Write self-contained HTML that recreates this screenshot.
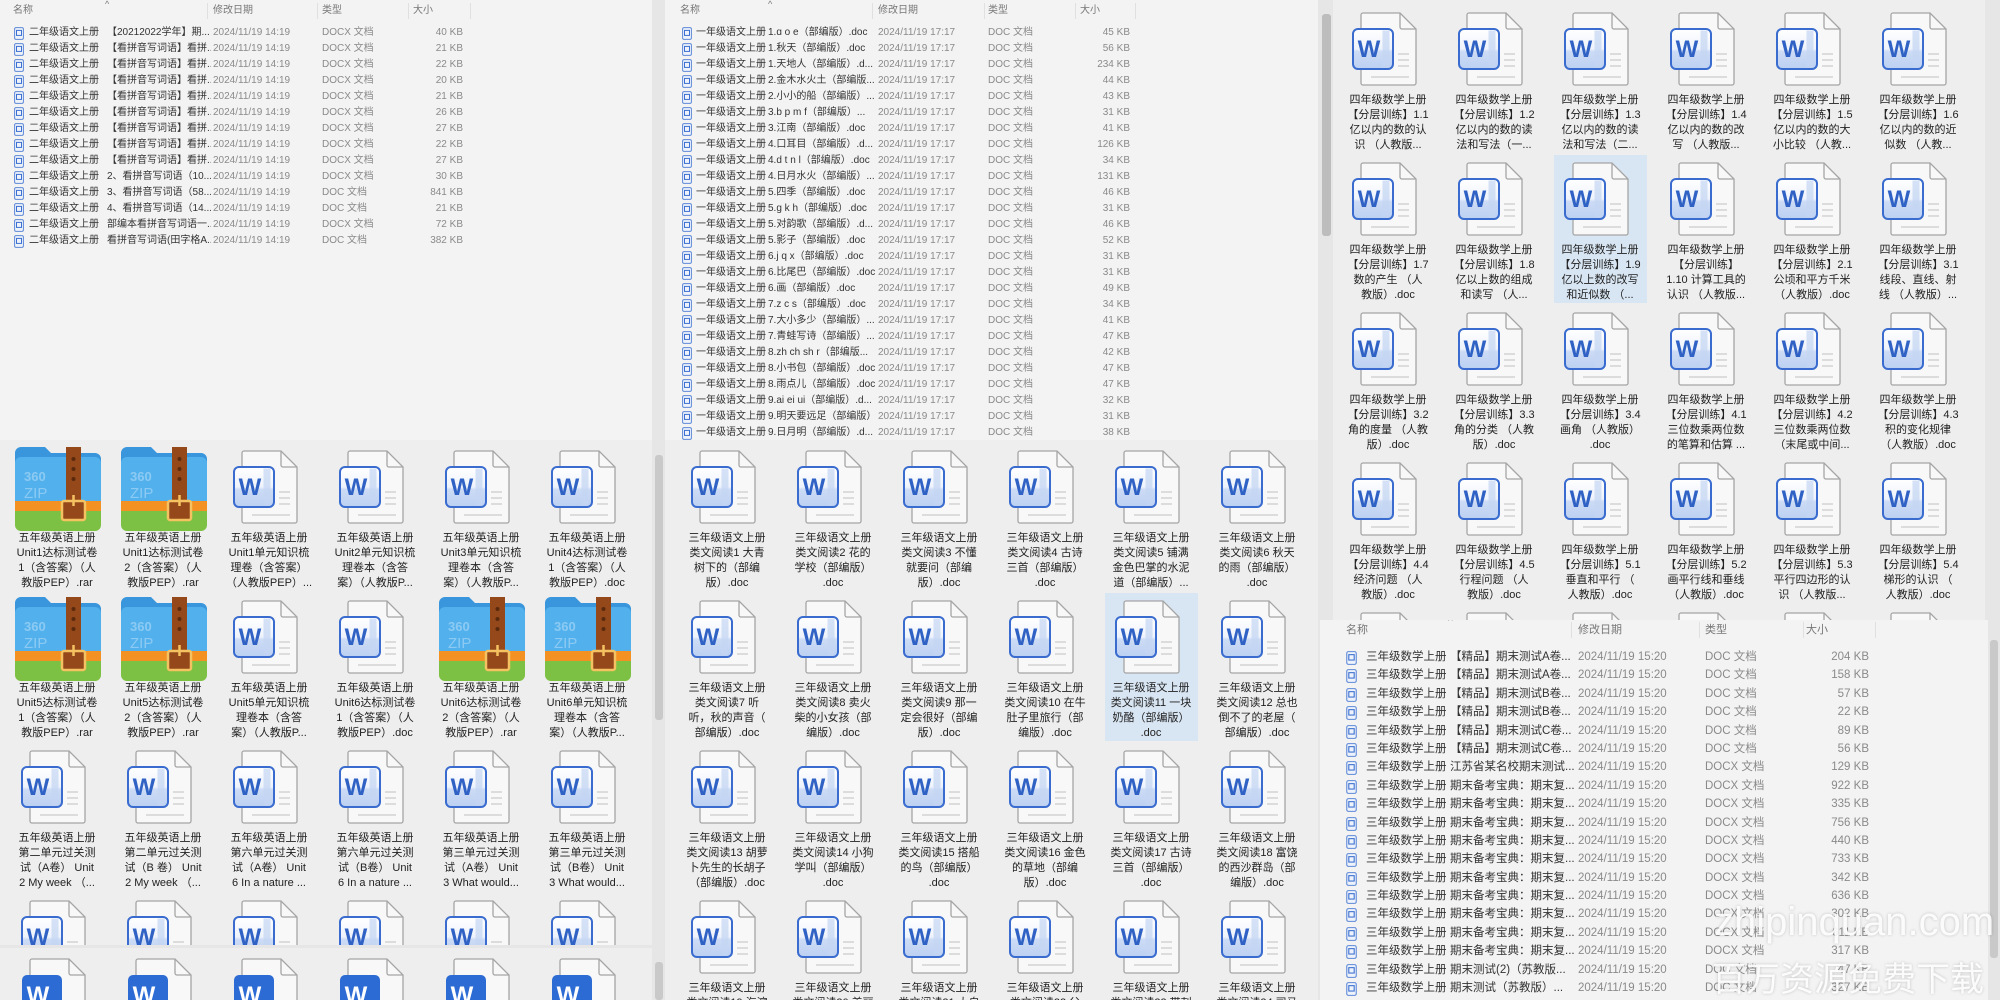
<!DOCTYPE html>
<html><head><meta charset="utf-8">
<style>
*{margin:0;padding:0;box-sizing:border-box}
html{width:2000px;height:1000px;overflow:hidden}
body{width:2000px;height:1000px;overflow:hidden;background:#e6e6e6;font-family:"Liberation Sans","Noto Sans CJK SC",sans-serif;position:relative}
.p{position:absolute;overflow:hidden;background:#eeeeee}
.sb{position:absolute;background:#e6e6e6}
.sb i{position:absolute;left:2px;right:2px;background:#c9c9c9;border-radius:3px}
.hd{position:absolute;left:0;right:0;top:3px;height:16px;font-size:10px;color:#777;line-height:16px}
.hd span{position:absolute}
.hd b{position:absolute;top:0;width:1px;height:16px;background:#e0e0e0}
.ls{position:absolute;left:0;right:0}
.r{position:relative;height:16px;font-size:10px;line-height:16px;white-space:nowrap;color:#333}
.r span{position:absolute;overflow:hidden}
.r svg{position:absolute;top:2px;width:10px;height:13px}
.r .d,.r .t,.r .z{color:#8a8a8a}
.r .z{text-align:right}
.L .r svg{left:14px}.L .a{left:29px;width:75px}.L .b{left:107px;width:104px}.L .d{left:213px}.L .t{left:322px}.L .z{left:400px;width:63px}
.M .r svg{left:17px}.M .a{left:31px;width:70px}.M .b{left:103px;width:108px}.M .d{left:213px}.M .t{left:323px}.M .z{left:400px;width:65px}
.R .r{height:18.4px;line-height:18.4px;font-size:11.5px}
.R .r svg{left:26px;top:3px;width:11px;height:14px}.R .a{left:46px;width:84px}.R .b{left:130px;width:126px}.R .d{left:258px}.R .t{left:385px}.R .z{left:480px;width:69px}
.g{position:absolute;display:grid;grid-template-columns:repeat(6,106px);grid-auto-rows:150px}
.c{position:relative;width:106px;height:150px;z-index:0}
.c svg.w{position:absolute;left:13px;top:0;width:80px;height:80px}
.c svg.zp{position:absolute;left:8px;top:-5px;width:86px;height:86px}
.c p{position:absolute;left:0;width:100px;top:81px;text-align:center;font-size:11px;line-height:15px;color:#222;white-space:nowrap;overflow:hidden}
.sel::before{content:"";position:absolute;left:4px;top:-7px;width:93px;height:148px;background:#d8e5f2;z-index:-1}
.wm{position:absolute;color:rgba(255,255,255,.9);text-shadow:0 0 3px rgba(0,0,0,.2);white-space:nowrap}
</style></head><body>
<svg width="0" height="0" style="position:absolute">
<defs>
<linearGradient id="wg" x1="0" y1="0" x2="0" y2="1"><stop offset="0" stop-color="#fff"/><stop offset=".5" stop-color="#eef3fc"/><stop offset=".56" stop-color="#cddcf5"/><stop offset="1" stop-color="#bcd0f2"/></linearGradient>
<symbol id="d" viewBox="0 0 80 80">
<path d="M12 1h37l16 16v54a2 2 0 0 1-2 2H12a2 2 0 0 1-2-2V3a2 2 0 0 1 2-2z" fill="#f8f8f8" stroke="#a5a5a5" stroke-width="1.3"/>
<path d="M49 1v14a2 2 0 0 0 2 2h14" fill="none" stroke="#a5a5a5" stroke-width="1.3"/>
<path d="M47 42h11M47 48h11M47 54h11M20 65h38" stroke="#dcdcdc" stroke-width="2"/>
<rect x="2" y="17" width="40" height="40" rx="5" fill="url(#wg)" stroke="#3a6ccf" stroke-width="2"/>
<path d="M35 18.5v37" stroke="#c4d6f3" stroke-width="7" opacity=".7"/>
<text x="18" y="45" font-family="Liberation Sans" font-weight="bold" font-size="24" fill="#2f62c4" text-anchor="middle">W</text>
</symbol>
<symbol id="f" viewBox="0 0 80 80">
<path d="M12 1h37l16 16v54a2 2 0 0 1-2 2H12a2 2 0 0 1-2-2V3a2 2 0 0 1 2-2z" fill="#f8f8f8" stroke="#a5a5a5" stroke-width="1.3"/>
<path d="M49 1v14a2 2 0 0 0 2 2h14" fill="none" stroke="#a5a5a5" stroke-width="1.3"/>
<rect x="2" y="17" width="40" height="40" rx="5" fill="#2d6bd4"/>
<text x="18" y="45" font-family="Liberation Sans" font-weight="bold" font-size="24" fill="#fff" text-anchor="middle">W</text>
</symbol>
<symbol id="zp" viewBox="0 0 86 86">
<path d="M6 2h24l6 6h44a6 6 0 0 1 6 6v6H0V8a6 6 0 0 1 6-6z" fill="#3a96dc"/>
<rect x="0" y="12" width="86" height="56" rx="6" fill="#52b1ec"/>
<rect x="0" y="56" width="86" height="10" fill="#f39223"/>
<path d="M0 66h86v14a6 6 0 0 1-6 6H6a6 6 0 0 1-6-6z" fill="#7cc143"/>
<rect x="51" y="2" width="15" height="60" fill="#95491b"/>
<circle cx="58.5" cy="14" r="2" fill="#5a2a0c"/><circle cx="58.5" cy="24" r="2" fill="#5a2a0c"/><circle cx="58.5" cy="34" r="2" fill="#5a2a0c"/>
<rect x="47" y="56" width="23" height="19" rx="2" fill="#95491b" stroke="#f5c262" stroke-width="2.5"/>
<path d="M58.5 50v11" stroke="#f5c262" stroke-width="2.5"/>
<text x="9" y="36" font-family="Liberation Sans" font-weight="bold" font-size="13" fill="#8ccaf3">360</text>
<text x="9" y="53" font-family="Liberation Sans" font-size="15" fill="#8ccaf3">ZIP</text>
</symbol>
<symbol id="s" viewBox="0 0 10 13"><rect x=".6" y=".6" width="8.8" height="11.8" rx="1.5" fill="#eef3fb" stroke="#5d88d6" stroke-width="1"/><rect x="2.5" y="3.4" width="5" height="5" fill="none" stroke="#3b6fd1" stroke-width="1"/></symbol>
</defs></svg>

<div class="p L" style="left:0;top:0;width:652px;height:440px;background:#f3f3f3">
<div class="hd"><span style="left:13px">名称</span><span style="left:105px;top:-7px;font-size:9px">^</span><b style="left:207px"></b><span style="left:213px">修改日期</span><b style="left:317px"></b><span style="left:322px">类型</span><b style="left:408px"></b><span style="left:413px">大小</span><b style="left:470px"></b></div>
<div class="ls" style="top:25px">
<div class="r"><svg><use href="#s"/></svg><span class="a">二年级语文上册</span><span class="b">【20212022学年】期...</span><span class="d">2024/11/19 14:19</span><span class="t">DOCX 文档</span><span class="z">40 KB</span></div>
<div class="r"><svg><use href="#s"/></svg><span class="a">二年级语文上册</span><span class="b">【看拼音写词语】看拼...</span><span class="d">2024/11/19 14:19</span><span class="t">DOCX 文档</span><span class="z">21 KB</span></div>
<div class="r"><svg><use href="#s"/></svg><span class="a">二年级语文上册</span><span class="b">【看拼音写词语】看拼...</span><span class="d">2024/11/19 14:19</span><span class="t">DOCX 文档</span><span class="z">22 KB</span></div>
<div class="r"><svg><use href="#s"/></svg><span class="a">二年级语文上册</span><span class="b">【看拼音写词语】看拼...</span><span class="d">2024/11/19 14:19</span><span class="t">DOCX 文档</span><span class="z">20 KB</span></div>
<div class="r"><svg><use href="#s"/></svg><span class="a">二年级语文上册</span><span class="b">【看拼音写词语】看拼...</span><span class="d">2024/11/19 14:19</span><span class="t">DOCX 文档</span><span class="z">21 KB</span></div>
<div class="r"><svg><use href="#s"/></svg><span class="a">二年级语文上册</span><span class="b">【看拼音写词语】看拼...</span><span class="d">2024/11/19 14:19</span><span class="t">DOCX 文档</span><span class="z">26 KB</span></div>
<div class="r"><svg><use href="#s"/></svg><span class="a">二年级语文上册</span><span class="b">【看拼音写词语】看拼...</span><span class="d">2024/11/19 14:19</span><span class="t">DOCX 文档</span><span class="z">27 KB</span></div>
<div class="r"><svg><use href="#s"/></svg><span class="a">二年级语文上册</span><span class="b">【看拼音写词语】看拼...</span><span class="d">2024/11/19 14:19</span><span class="t">DOCX 文档</span><span class="z">22 KB</span></div>
<div class="r"><svg><use href="#s"/></svg><span class="a">二年级语文上册</span><span class="b">【看拼音写词语】看拼...</span><span class="d">2024/11/19 14:19</span><span class="t">DOCX 文档</span><span class="z">27 KB</span></div>
<div class="r"><svg><use href="#s"/></svg><span class="a">二年级语文上册</span><span class="b">2、看拼音写词语（10...</span><span class="d">2024/11/19 14:19</span><span class="t">DOCX 文档</span><span class="z">30 KB</span></div>
<div class="r"><svg><use href="#s"/></svg><span class="a">二年级语文上册</span><span class="b">3、看拼音写词语（58...</span><span class="d">2024/11/19 14:19</span><span class="t">DOC 文档</span><span class="z">841 KB</span></div>
<div class="r"><svg><use href="#s"/></svg><span class="a">二年级语文上册</span><span class="b">4、看拼音写词语（14...</span><span class="d">2024/11/19 14:19</span><span class="t">DOC 文档</span><span class="z">21 KB</span></div>
<div class="r"><svg><use href="#s"/></svg><span class="a">二年级语文上册</span><span class="b">部编本看拼音写词语一...</span><span class="d">2024/11/19 14:19</span><span class="t">DOCX 文档</span><span class="z">72 KB</span></div>
<div class="r"><svg><use href="#s"/></svg><span class="a">二年级语文上册</span><span class="b">看拼音写词语(田字格A...</span><span class="d">2024/11/19 14:19</span><span class="t">DOC 文档</span><span class="z">382 KB</span></div>
</div></div>

<div class="p M" style="left:665px;top:0;width:653px;height:440px;background:#f3f3f3">
<div class="hd"><span style="left:15px">名称</span><span style="left:103px;top:-7px;font-size:9px">^</span><b style="left:207px"></b><span style="left:213px">修改日期</span><b style="left:319px"></b><span style="left:323px">类型</span><b style="left:410px"></b><span style="left:415px">大小</span><b style="left:470px"></b></div>
<div class="ls" style="top:25px">
<div class="r"><svg><use href="#s"/></svg><span class="a">一年级语文上册</span><span class="b">1.ɑ o e（部编版）.doc</span><span class="d">2024/11/19 17:17</span><span class="t">DOC 文档</span><span class="z">45 KB</span></div>
<div class="r"><svg><use href="#s"/></svg><span class="a">一年级语文上册</span><span class="b">1.秋天（部编版）.doc</span><span class="d">2024/11/19 17:17</span><span class="t">DOC 文档</span><span class="z">56 KB</span></div>
<div class="r"><svg><use href="#s"/></svg><span class="a">一年级语文上册</span><span class="b">1.天地人（部编版）.d...</span><span class="d">2024/11/19 17:17</span><span class="t">DOC 文档</span><span class="z">234 KB</span></div>
<div class="r"><svg><use href="#s"/></svg><span class="a">一年级语文上册</span><span class="b">2.金木水火土（部编版...</span><span class="d">2024/11/19 17:17</span><span class="t">DOC 文档</span><span class="z">44 KB</span></div>
<div class="r"><svg><use href="#s"/></svg><span class="a">一年级语文上册</span><span class="b">2.小小的船（部编版）...</span><span class="d">2024/11/19 17:17</span><span class="t">DOC 文档</span><span class="z">43 KB</span></div>
<div class="r"><svg><use href="#s"/></svg><span class="a">一年级语文上册</span><span class="b">3.b p m f（部编版）...</span><span class="d">2024/11/19 17:17</span><span class="t">DOC 文档</span><span class="z">31 KB</span></div>
<div class="r"><svg><use href="#s"/></svg><span class="a">一年级语文上册</span><span class="b">3.江南（部编版）.doc</span><span class="d">2024/11/19 17:17</span><span class="t">DOC 文档</span><span class="z">41 KB</span></div>
<div class="r"><svg><use href="#s"/></svg><span class="a">一年级语文上册</span><span class="b">4.口耳目（部编版）.d...</span><span class="d">2024/11/19 17:17</span><span class="t">DOC 文档</span><span class="z">126 KB</span></div>
<div class="r"><svg><use href="#s"/></svg><span class="a">一年级语文上册</span><span class="b">4.d t n l（部编版）.doc</span><span class="d">2024/11/19 17:17</span><span class="t">DOC 文档</span><span class="z">34 KB</span></div>
<div class="r"><svg><use href="#s"/></svg><span class="a">一年级语文上册</span><span class="b">4.日月水火（部编版）...</span><span class="d">2024/11/19 17:17</span><span class="t">DOC 文档</span><span class="z">131 KB</span></div>
<div class="r"><svg><use href="#s"/></svg><span class="a">一年级语文上册</span><span class="b">5.四季（部编版）.doc</span><span class="d">2024/11/19 17:17</span><span class="t">DOC 文档</span><span class="z">46 KB</span></div>
<div class="r"><svg><use href="#s"/></svg><span class="a">一年级语文上册</span><span class="b">5.g k h（部编版）.doc</span><span class="d">2024/11/19 17:17</span><span class="t">DOC 文档</span><span class="z">31 KB</span></div>
<div class="r"><svg><use href="#s"/></svg><span class="a">一年级语文上册</span><span class="b">5.对韵歌（部编版）.d...</span><span class="d">2024/11/19 17:17</span><span class="t">DOC 文档</span><span class="z">46 KB</span></div>
<div class="r"><svg><use href="#s"/></svg><span class="a">一年级语文上册</span><span class="b">5.影子（部编版）.doc</span><span class="d">2024/11/19 17:17</span><span class="t">DOC 文档</span><span class="z">52 KB</span></div>
<div class="r"><svg><use href="#s"/></svg><span class="a">一年级语文上册</span><span class="b">6.j q x（部编版）.doc</span><span class="d">2024/11/19 17:17</span><span class="t">DOC 文档</span><span class="z">31 KB</span></div>
<div class="r"><svg><use href="#s"/></svg><span class="a">一年级语文上册</span><span class="b">6.比尾巴（部编版）.doc</span><span class="d">2024/11/19 17:17</span><span class="t">DOC 文档</span><span class="z">31 KB</span></div>
<div class="r"><svg><use href="#s"/></svg><span class="a">一年级语文上册</span><span class="b">6.画（部编版）.doc</span><span class="d">2024/11/19 17:17</span><span class="t">DOC 文档</span><span class="z">49 KB</span></div>
<div class="r"><svg><use href="#s"/></svg><span class="a">一年级语文上册</span><span class="b">7.z c s（部编版）.doc</span><span class="d">2024/11/19 17:17</span><span class="t">DOC 文档</span><span class="z">34 KB</span></div>
<div class="r"><svg><use href="#s"/></svg><span class="a">一年级语文上册</span><span class="b">7.大小多少（部编版）...</span><span class="d">2024/11/19 17:17</span><span class="t">DOC 文档</span><span class="z">41 KB</span></div>
<div class="r"><svg><use href="#s"/></svg><span class="a">一年级语文上册</span><span class="b">7.青蛙写诗（部编版）...</span><span class="d">2024/11/19 17:17</span><span class="t">DOC 文档</span><span class="z">47 KB</span></div>
<div class="r"><svg><use href="#s"/></svg><span class="a">一年级语文上册</span><span class="b">8.zh ch sh r（部编版...</span><span class="d">2024/11/19 17:17</span><span class="t">DOC 文档</span><span class="z">42 KB</span></div>
<div class="r"><svg><use href="#s"/></svg><span class="a">一年级语文上册</span><span class="b">8.小书包（部编版）.doc</span><span class="d">2024/11/19 17:17</span><span class="t">DOC 文档</span><span class="z">47 KB</span></div>
<div class="r"><svg><use href="#s"/></svg><span class="a">一年级语文上册</span><span class="b">8.雨点儿（部编版）.doc</span><span class="d">2024/11/19 17:17</span><span class="t">DOC 文档</span><span class="z">47 KB</span></div>
<div class="r"><svg><use href="#s"/></svg><span class="a">一年级语文上册</span><span class="b">9.ai ei ui（部编版）.d...</span><span class="d">2024/11/19 17:17</span><span class="t">DOC 文档</span><span class="z">32 KB</span></div>
<div class="r"><svg><use href="#s"/></svg><span class="a">一年级语文上册</span><span class="b">9.明天要远足（部编版）...</span><span class="d">2024/11/19 17:17</span><span class="t">DOC 文档</span><span class="z">31 KB</span></div>
<div class="r"><svg><use href="#s"/></svg><span class="a">一年级语文上册</span><span class="b">9.日月明（部编版）.d...</span><span class="d">2024/11/19 17:17</span><span class="t">DOC 文档</span><span class="z">38 KB</span></div>
</div></div>
<div class="sb" style="left:1318px;top:0;width:12px;height:440px"><i style="top:28px;height:385px"></i></div>

<div class="p" style="left:0;top:440px;width:652px;height:505px">
<div class="g" style="left:7px;top:10px">
<div class="c"><svg class="zp"><use href="#zp"/></svg><p>五年级英语上册<br>Unit1达标测试卷<br>1（含答案）（人<br>教版PEP）.rar</p></div>
<div class="c"><svg class="zp"><use href="#zp"/></svg><p>五年级英语上册<br>Unit1达标测试卷<br>2（含答案）（人<br>教版PEP）.rar</p></div>
<div class="c"><svg class="w"><use href="#d"/></svg><p>五年级英语上册<br>Unit1单元知识梳<br>理卷（含答案）<br>（人教版PEP）...</p></div>
<div class="c"><svg class="w"><use href="#d"/></svg><p>五年级英语上册<br>Unit2单元知识梳<br>理卷本（含答<br>案）（人教版P...</p></div>
<div class="c"><svg class="w"><use href="#d"/></svg><p>五年级英语上册<br>Unit3单元知识梳<br>理卷本（含答<br>案）（人教版P...</p></div>
<div class="c"><svg class="w"><use href="#d"/></svg><p>五年级英语上册<br>Unit4达标测试卷<br>1（含答案）（人<br>教版PEP）.doc</p></div>
<div class="c"><svg class="zp"><use href="#zp"/></svg><p>五年级英语上册<br>Unit5达标测试卷<br>1（含答案）（人<br>教版PEP）.rar</p></div>
<div class="c"><svg class="zp"><use href="#zp"/></svg><p>五年级英语上册<br>Unit5达标测试卷<br>2（含答案）（人<br>教版PEP）.rar</p></div>
<div class="c"><svg class="w"><use href="#d"/></svg><p>五年级英语上册<br>Unit5单元知识梳<br>理卷本（含答<br>案）（人教版P...</p></div>
<div class="c"><svg class="w"><use href="#d"/></svg><p>五年级英语上册<br>Unit6达标测试卷<br>1（含答案）（人<br>教版PEP）.doc</p></div>
<div class="c"><svg class="zp"><use href="#zp"/></svg><p>五年级英语上册<br>Unit6达标测试卷<br>2（含答案）（人<br>教版PEP）.rar</p></div>
<div class="c"><svg class="zp"><use href="#zp"/></svg><p>五年级英语上册<br>Unit6单元知识梳<br>理卷本（含答<br>案）（人教版P...</p></div>
<div class="c"><svg class="w"><use href="#d"/></svg><p>五年级英语上册<br>第二单元过关测<br>试（A卷） Unit<br>2 My week （...</p></div>
<div class="c"><svg class="w"><use href="#d"/></svg><p>五年级英语上册<br>第二单元过关测<br>试（B 卷） Unit<br>2 My week （...</p></div>
<div class="c"><svg class="w"><use href="#d"/></svg><p>五年级英语上册<br>第六单元过关测<br>试（A卷） Unit<br>6 In a nature ...</p></div>
<div class="c"><svg class="w"><use href="#d"/></svg><p>五年级英语上册<br>第六单元过关测<br>试（B卷） Unit<br>6 In a nature ...</p></div>
<div class="c"><svg class="w"><use href="#d"/></svg><p>五年级英语上册<br>第三单元过关测<br>试（A卷） Unit<br>3 What would...</p></div>
<div class="c"><svg class="w"><use href="#d"/></svg><p>五年级英语上册<br>第三单元过关测<br>试（B卷） Unit<br>3 What would...</p></div>
<div class="c"><svg class="w"><use href="#d"/></svg></div><div class="c"><svg class="w"><use href="#d"/></svg></div><div class="c"><svg class="w"><use href="#d"/></svg></div><div class="c"><svg class="w"><use href="#d"/></svg></div><div class="c"><svg class="w"><use href="#d"/></svg></div><div class="c"><svg class="w"><use href="#d"/></svg></div>
</div></div>
<div class="sb" style="left:653px;top:440px;width:12px;height:505px"><i style="top:15px;height:265px"></i></div>

<div class="p" style="left:0;top:948px;width:652px;height:52px">
<div class="g" style="left:7px;top:10px">
<div class="c"><svg class="w"><use href="#f"/></svg></div><div class="c"><svg class="w"><use href="#f"/></svg></div><div class="c"><svg class="w"><use href="#f"/></svg></div><div class="c"><svg class="w"><use href="#f"/></svg></div><div class="c"><svg class="w"><use href="#f"/></svg></div><div class="c"><svg class="w"><use href="#f"/></svg></div>
</div></div>
<div class="sb" style="left:653px;top:948px;width:12px;height:52px"><i style="top:14px;height:38px"></i></div>

<div class="p" style="left:665px;top:440px;width:653px;height:560px">
<div class="g" style="left:12px;top:10px">
<div class="c"><svg class="w"><use href="#d"/></svg><p>三年级语文上册<br>类文阅读1 大青<br>树下的（部编<br>版）.doc</p></div>
<div class="c"><svg class="w"><use href="#d"/></svg><p>三年级语文上册<br>类文阅读2 花的<br>学校（部编版）<br>.doc</p></div>
<div class="c"><svg class="w"><use href="#d"/></svg><p>三年级语文上册<br>类文阅读3 不懂<br>就要问（部编<br>版）.doc</p></div>
<div class="c"><svg class="w"><use href="#d"/></svg><p>三年级语文上册<br>类文阅读4 古诗<br>三首（部编版）<br>.doc</p></div>
<div class="c"><svg class="w"><use href="#d"/></svg><p>三年级语文上册<br>类文阅读5 铺满<br>金色巴掌的水泥<br>道（部编版）...</p></div>
<div class="c"><svg class="w"><use href="#d"/></svg><p>三年级语文上册<br>类文阅读6 秋天<br>的雨（部编版）<br>.doc</p></div>
<div class="c"><svg class="w"><use href="#d"/></svg><p>三年级语文上册<br>类文阅读7 听<br>听，秋的声音（<br>部编版）.doc</p></div>
<div class="c"><svg class="w"><use href="#d"/></svg><p>三年级语文上册<br>类文阅读8 卖火<br>柴的小女孩（部<br>编版）.doc</p></div>
<div class="c"><svg class="w"><use href="#d"/></svg><p>三年级语文上册<br>类文阅读9 那一<br>定会很好（部编<br>版）.doc</p></div>
<div class="c"><svg class="w"><use href="#d"/></svg><p>三年级语文上册<br>类文阅读10 在牛<br>肚子里旅行（部<br>编版）.doc</p></div>
<div class="c sel"><svg class="w"><use href="#d"/></svg><p>三年级语文上册<br>类文阅读11 一块<br>奶酪（部编版）<br>.doc</p></div>
<div class="c"><svg class="w"><use href="#d"/></svg><p>三年级语文上册<br>类文阅读12 总也<br>倒不了的老屋（<br>部编版）.doc</p></div>
<div class="c"><svg class="w"><use href="#d"/></svg><p>三年级语文上册<br>类文阅读13 胡萝<br>卜先生的长胡子<br>（部编版）.doc</p></div>
<div class="c"><svg class="w"><use href="#d"/></svg><p>三年级语文上册<br>类文阅读14 小狗<br>学叫（部编版）<br>.doc</p></div>
<div class="c"><svg class="w"><use href="#d"/></svg><p>三年级语文上册<br>类文阅读15 搭船<br>的鸟（部编版）<br>.doc</p></div>
<div class="c"><svg class="w"><use href="#d"/></svg><p>三年级语文上册<br>类文阅读16 金色<br>的草地（部编<br>版）.doc</p></div>
<div class="c"><svg class="w"><use href="#d"/></svg><p>三年级语文上册<br>类文阅读17 古诗<br>三首（部编版）<br>.doc</p></div>
<div class="c"><svg class="w"><use href="#d"/></svg><p>三年级语文上册<br>类文阅读18 富饶<br>的西沙群岛（部<br>编版）.doc</p></div>
<div class="c"><svg class="w"><use href="#d"/></svg><p>三年级语文上册<br>类文阅读19 海滨</p></div>
<div class="c"><svg class="w"><use href="#d"/></svg><p>三年级语文上册<br>类文阅读20 美丽</p></div>
<div class="c"><svg class="w"><use href="#d"/></svg><p>三年级语文上册<br>类文阅读21 大自</p></div>
<div class="c"><svg class="w"><use href="#d"/></svg><p>三年级语文上册<br>类文阅读22 父</p></div>
<div class="c"><svg class="w"><use href="#d"/></svg><p>三年级语文上册<br>类文阅读23 带刺</p></div>
<div class="c"><svg class="w"><use href="#d"/></svg><p>三年级语文上册<br>类文阅读24 司马</p></div>
</div></div>
<div class="sb" style="left:1318px;top:440px;width:12px;height:560px"><i style="top:15px;height:480px"></i></div>

<div class="sb" style="left:1320px;top:0;width:13px;height:620px"><i style="top:14px;height:222px;background:#bdbdbd"></i></div>
<div class="p" style="left:1333px;top:0;width:652px;height:620px">
<div class="g" style="left:5px;top:12px">
<div class="c"><svg class="w"><use href="#d"/></svg><p>四年级数学上册<br>【分层训练】1.1<br>亿以内的数的认<br>识 （人教版...</p></div>
<div class="c"><svg class="w"><use href="#d"/></svg><p>四年级数学上册<br>【分层训练】1.2<br>亿以内的数的读<br>法和写法（一...</p></div>
<div class="c"><svg class="w"><use href="#d"/></svg><p>四年级数学上册<br>【分层训练】1.3<br>亿以内的数的读<br>法和写法（二...</p></div>
<div class="c"><svg class="w"><use href="#d"/></svg><p>四年级数学上册<br>【分层训练】1.4<br>亿以内的数的改<br>写 （人教版...</p></div>
<div class="c"><svg class="w"><use href="#d"/></svg><p>四年级数学上册<br>【分层训练】1.5<br>亿以内的数的大<br>小比较 （人教...</p></div>
<div class="c"><svg class="w"><use href="#d"/></svg><p>四年级数学上册<br>【分层训练】1.6<br>亿以内的数的近<br>似数 （人教...</p></div>
<div class="c"><svg class="w"><use href="#d"/></svg><p>四年级数学上册<br>【分层训练】1.7<br>数的产生 （人<br>教版）.doc</p></div>
<div class="c"><svg class="w"><use href="#d"/></svg><p>四年级数学上册<br>【分层训练】1.8<br>亿以上数的组成<br>和读写 （人...</p></div>
<div class="c sel"><svg class="w"><use href="#d"/></svg><p>四年级数学上册<br>【分层训练】1.9<br>亿以上数的改写<br>和近似数 （...</p></div>
<div class="c"><svg class="w"><use href="#d"/></svg><p>四年级数学上册<br>【分层训练】<br>1.10 计算工具的<br>认识 （人教版...</p></div>
<div class="c"><svg class="w"><use href="#d"/></svg><p>四年级数学上册<br>【分层训练】2.1<br>公顷和平方千米<br>（人教版）.doc</p></div>
<div class="c"><svg class="w"><use href="#d"/></svg><p>四年级数学上册<br>【分层训练】3.1<br>线段、直线、射<br>线 （人教版）...</p></div>
<div class="c"><svg class="w"><use href="#d"/></svg><p>四年级数学上册<br>【分层训练】3.2<br>角的度量 （人教<br>版）.doc</p></div>
<div class="c"><svg class="w"><use href="#d"/></svg><p>四年级数学上册<br>【分层训练】3.3<br>角的分类 （人教<br>版）.doc</p></div>
<div class="c"><svg class="w"><use href="#d"/></svg><p>四年级数学上册<br>【分层训练】3.4<br>画角 （人教版）<br>.doc</p></div>
<div class="c"><svg class="w"><use href="#d"/></svg><p>四年级数学上册<br>【分层训练】4.1<br>三位数乘两位数<br>的笔算和估算 ...</p></div>
<div class="c"><svg class="w"><use href="#d"/></svg><p>四年级数学上册<br>【分层训练】4.2<br>三位数乘两位数<br>（末尾或中间...</p></div>
<div class="c"><svg class="w"><use href="#d"/></svg><p>四年级数学上册<br>【分层训练】4.3<br>积的变化规律<br>（人教版）.doc</p></div>
<div class="c"><svg class="w"><use href="#d"/></svg><p>四年级数学上册<br>【分层训练】4.4<br>经济问题 （人<br>教版）.doc</p></div>
<div class="c"><svg class="w"><use href="#d"/></svg><p>四年级数学上册<br>【分层训练】4.5<br>行程问题 （人<br>教版）.doc</p></div>
<div class="c"><svg class="w"><use href="#d"/></svg><p>四年级数学上册<br>【分层训练】5.1<br>垂直和平行 （<br>人教版）.doc</p></div>
<div class="c"><svg class="w"><use href="#d"/></svg><p>四年级数学上册<br>【分层训练】5.2<br>画平行线和垂线<br>（人教版）.doc</p></div>
<div class="c"><svg class="w"><use href="#d"/></svg><p>四年级数学上册<br>【分层训练】5.3<br>平行四边形的认<br>识 （人教版...</p></div>
<div class="c"><svg class="w"><use href="#d"/></svg><p>四年级数学上册<br>【分层训练】5.4<br>梯形的认识 （<br>人教版）.doc</p></div>
<div class="c"><svg class="w"><use href="#d"/></svg></div><div class="c"><svg class="w"><use href="#d"/></svg></div><div class="c"><svg class="w"><use href="#d"/></svg></div><div class="c"><svg class="w"><use href="#d"/></svg></div><div class="c"><svg class="w"><use href="#d"/></svg></div><div class="c"><svg class="w"><use href="#d"/></svg></div>
</div></div>
<div class="sb" style="left:1986px;top:0;width:14px;height:620px"></div>

<div class="p R" style="left:1320px;top:620px;width:668px;height:380px;background:#f3f3f3">
<div class="hd" style="top:2px;font-size:11px"><span style="left:26px">名称</span><span style="left:128px;top:-8px;font-size:10px">^</span><b style="left:251px"></b><span style="left:258px">修改日期</span><b style="left:379px"></b><span style="left:385px">类型</span><b style="left:483px"></b><span style="left:486px">大小</span><b style="left:555px"></b></div>
<div class="ls" style="top:28px">
<div class="r"><svg><use href="#s"/></svg><span class="a">三年级数学上册</span><span class="b">【精品】期末测试A卷...</span><span class="d">2024/11/19 15:20</span><span class="t">DOC 文档</span><span class="z">204 KB</span></div>
<div class="r"><svg><use href="#s"/></svg><span class="a">三年级数学上册</span><span class="b">【精品】期末测试A卷...</span><span class="d">2024/11/19 15:20</span><span class="t">DOC 文档</span><span class="z">158 KB</span></div>
<div class="r"><svg><use href="#s"/></svg><span class="a">三年级数学上册</span><span class="b">【精品】期末测试B卷...</span><span class="d">2024/11/19 15:20</span><span class="t">DOC 文档</span><span class="z">57 KB</span></div>
<div class="r"><svg><use href="#s"/></svg><span class="a">三年级数学上册</span><span class="b">【精品】期末测试B卷...</span><span class="d">2024/11/19 15:20</span><span class="t">DOC 文档</span><span class="z">22 KB</span></div>
<div class="r"><svg><use href="#s"/></svg><span class="a">三年级数学上册</span><span class="b">【精品】期末测试C卷...</span><span class="d">2024/11/19 15:20</span><span class="t">DOC 文档</span><span class="z">89 KB</span></div>
<div class="r"><svg><use href="#s"/></svg><span class="a">三年级数学上册</span><span class="b">【精品】期末测试C卷...</span><span class="d">2024/11/19 15:20</span><span class="t">DOC 文档</span><span class="z">56 KB</span></div>
<div class="r"><svg><use href="#s"/></svg><span class="a">三年级数学上册</span><span class="b">江苏省某名校期末测试...</span><span class="d">2024/11/19 15:20</span><span class="t">DOCX 文档</span><span class="z">129 KB</span></div>
<div class="r"><svg><use href="#s"/></svg><span class="a">三年级数学上册</span><span class="b">期末备考宝典：期末复...</span><span class="d">2024/11/19 15:20</span><span class="t">DOCX 文档</span><span class="z">922 KB</span></div>
<div class="r"><svg><use href="#s"/></svg><span class="a">三年级数学上册</span><span class="b">期末备考宝典：期末复...</span><span class="d">2024/11/19 15:20</span><span class="t">DOCX 文档</span><span class="z">335 KB</span></div>
<div class="r"><svg><use href="#s"/></svg><span class="a">三年级数学上册</span><span class="b">期末备考宝典：期末复...</span><span class="d">2024/11/19 15:20</span><span class="t">DOCX 文档</span><span class="z">756 KB</span></div>
<div class="r"><svg><use href="#s"/></svg><span class="a">三年级数学上册</span><span class="b">期末备考宝典：期末复...</span><span class="d">2024/11/19 15:20</span><span class="t">DOCX 文档</span><span class="z">440 KB</span></div>
<div class="r"><svg><use href="#s"/></svg><span class="a">三年级数学上册</span><span class="b">期末备考宝典：期末复...</span><span class="d">2024/11/19 15:20</span><span class="t">DOCX 文档</span><span class="z">733 KB</span></div>
<div class="r"><svg><use href="#s"/></svg><span class="a">三年级数学上册</span><span class="b">期末备考宝典：期末复...</span><span class="d">2024/11/19 15:20</span><span class="t">DOCX 文档</span><span class="z">342 KB</span></div>
<div class="r"><svg><use href="#s"/></svg><span class="a">三年级数学上册</span><span class="b">期末备考宝典：期末复...</span><span class="d">2024/11/19 15:20</span><span class="t">DOCX 文档</span><span class="z">636 KB</span></div>
<div class="r"><svg><use href="#s"/></svg><span class="a">三年级数学上册</span><span class="b">期末备考宝典：期末复...</span><span class="d">2024/11/19 15:20</span><span class="t">DOCX 文档</span><span class="z">302 KB</span></div>
<div class="r"><svg><use href="#s"/></svg><span class="a">三年级数学上册</span><span class="b">期末备考宝典：期末复...</span><span class="d">2024/11/19 15:20</span><span class="t">DOCX 文档</span><span class="z">611 KB</span></div>
<div class="r"><svg><use href="#s"/></svg><span class="a">三年级数学上册</span><span class="b">期末备考宝典：期末复...</span><span class="d">2024/11/19 15:20</span><span class="t">DOCX 文档</span><span class="z">317 KB</span></div>
<div class="r"><svg><use href="#s"/></svg><span class="a">三年级数学上册</span><span class="b">期末测试(2)（苏教版...</span><span class="d">2024/11/19 15:20</span><span class="t">DOC 文档</span><span class="z">47 KB</span></div>
<div class="r"><svg><use href="#s"/></svg><span class="a">三年级数学上册</span><span class="b">期末测试（苏教版）...</span><span class="d">2024/11/19 15:20</span><span class="t">DOC 文档</span><span class="z">327 KB</span></div>
</div></div>
<div class="sb" style="left:1988px;top:620px;width:12px;height:380px"><i style="top:20px;height:318px"></i></div>

<div class="wm" style="left:1714px;top:900px;font-size:40px;font-family:'Liberation Sans',sans-serif">zhipinquan.com</div>
<div class="wm" style="left:1712px;top:952px;font-size:34px;font-family:'Liberation Sans','Noto Sans CJK SC',sans-serif">百万资源免费下载</div>
</body></html>
